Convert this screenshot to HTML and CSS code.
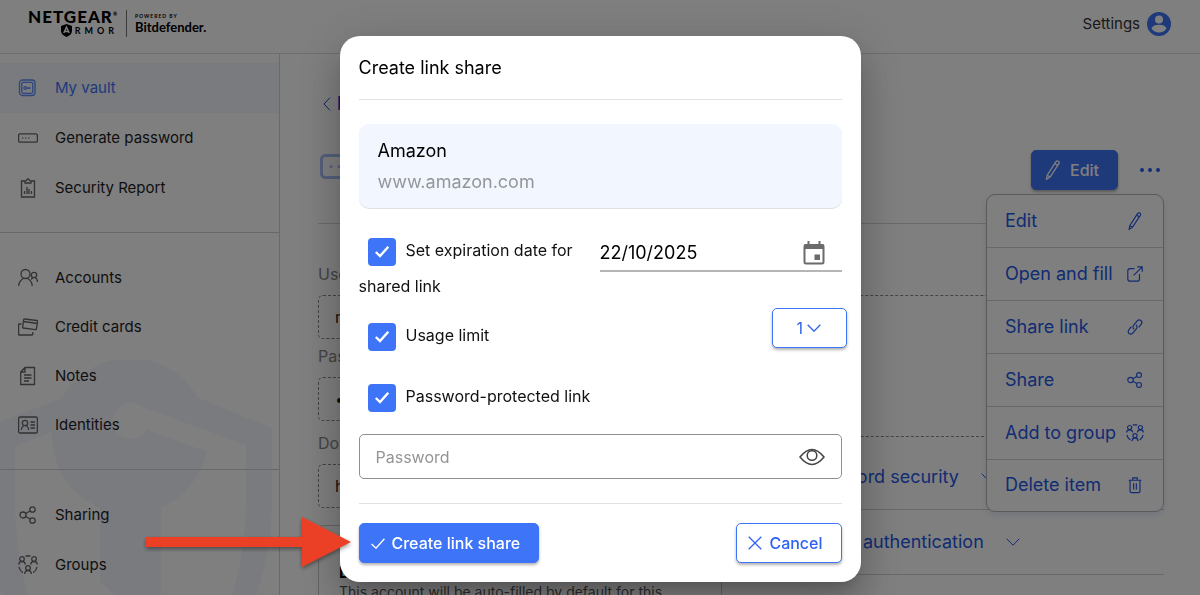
FILE: index.html
```
<!DOCTYPE html>
<html lang="en">
<head>
  <meta charset="UTF-8">
  <meta name="viewport" content="width=device-width, initial-scale=1">
  <title>NETGEAR Armor - Create link share</title>
  <link rel="stylesheet" href="styles.css">
</head>
<body>

<!-- shared icons -->
<svg class="sprite" aria-hidden="true">
  <symbol id="i-share" viewBox="0 0 20 20"><circle cx="5" cy="10" r="3"/><circle cx="14.500" cy="4.500" r="2.700"/><circle cx="14.500" cy="15.500" r="2.700"/><path d="M7.700 8.500 12 6M7.700 11.500 12 14"/></symbol>
  <symbol id="i-group" viewBox="0 0 20 20"><circle cx="4" cy="4" r="2.300"/><circle cx="16" cy="4" r="2.300"/><circle cx="10" cy="13" r="2.300"/><path d="M.7 9.500C.8 7.500 2.200 6.500 4 6.500s3.200 1 3.300 3M12.700 9.500c.1-2 1.500-3 3.300-3s3.200 1 3.300 3M6.700 19c.1-2.300 1.500-3.500 3.300-3.500s3.200 1.200 3.300 3.500M7.500 1h5M1 12c.4 2.400 1.700 4.300 3.800 5.700M19 12c-.4 2.400-1.700 4.300-3.800 5.700"/></symbol>
  <symbol id="i-pen" viewBox="0 0 20 20"><path d="M3.500 19.200 4.200 15.200 12.800 1.800c.6-.9 1.600-1.100 2.500-.6s1.100 1.600.6 2.500L7.100 17zM4.200 15.200 7.100 17M11.800 3.500l2.900 1.900"/></symbol>
  <symbol id="i-down" viewBox="0 0 14 8"><path d="M.7.700 7 7.200 13.300.700"/></symbol>
</svg>

<header class="topbar">
  <div class="brand">
    <div class="netgear">
      <span class="netgear-name">NETGEAR<sup>®</sup></span>
      <span class="armor"><svg width="11" height="13" viewBox="0 0 11 13"><path class="shield" d="M5.500 0 11 2v5c0 2.500-2.200 4.500-5.500 6C2.200 11.500 0 9.500 0 7V2z"/><path class="shield-a" d="M2.800 9 5.500 3.200 8.200 9M3.800 7.500h3.400"/></svg>RMOR</span>
    </div>
    <div class="bitdefender">
      <span class="powered">POWERED BY</span>
      <span class="bd-name">Bitdefender.</span>
    </div>
  </div>
  <a class="settings" href="#">Settings
    <svg width="24" height="24" viewBox="0 0 24 24"><circle class="av" cx="12" cy="12" r="12"/><circle class="av-in" cx="12" cy="7.500" r="4"/><path class="av-in" d="M4.500 16.500c1-2.700 4-3.700 7.500-3.700s6.500 1 7.500 3.700c-1.500 2.500-4.500 4-7.500 4s-6-1.500-7.500-4z"/></svg>
  </a>
</header>

<div class="layout">
  <nav class="sidebar">
    <svg class="watermark" viewBox="0 360 280 235" aria-hidden="true">
      <path d="M-6 424 65 397H197L272 428V500Q272 550 255 600H5L-6 580z"/>
      <circle cx="130" cy="436" r="76"/>
      <path class="cut" d="M15 446 130 403 246 445V500Q246 550 231 600H29Q15 550 15 500z"/>
      <circle cx="130" cy="436" r="78"/>
      <path d="M100 505H161V600H121L100 582z"/>
      <path class="cut" d="M137 405 246 445V470L208 452 147 430 130 430z"/>
      <circle class="cut" cx="131" cy="421" r="18"/>
    </svg>
    <div class="nav-group main">
      <a class="active" href="#"><svg class="ico" viewBox="0 0 20 20"><rect x="1.500" y="2" width="15.500" height="15.500" rx="3"/><rect x="3.800" y="4.300" width="11" height="11" rx="1.500"/><circle cx="7.200" cy="10" r="1.300"/><path d="M8.500 10h4M11 10v1"/></svg>My vault</a>
      <a href="#"><svg class="ico" viewBox="0 0 20 20"><rect x=".6" y="5.800" width="18.800" height="8.400" rx="1.500"/><path d="M4.300 10h1M7.300 10h1M10.300 10h1"/></svg>Generate password</a>
      <a href="#"><svg class="ico" viewBox="0 0 20 20"><path d="M7 3H3.500v16h13V3H13M7 3v2h6V3l-1.500-.5Q11.300 1 10 1T8.500 2.500zM6.500 16v-3M9 16V9M11 16v-5M13.500 16v-3"/></svg>Security Report</a>
    </div>
    <div class="nav-group types">
      <a href="#"><svg class="ico" viewBox="0 0 20 20"><circle cx="7.500" cy="6" r="4.500"/><circle cx="16" cy="7" r="2.700"/><path d="M.7 18c0-4 1.500-5.500 4.500-7.500M9.800 10.500c3 2 4.400 3.500 4.400 7.500M14.700 9.500l-1.500 2M17.200 9.500c1.500.8 2.300 2 2.300 4.500"/></svg>Accounts</a>
      <a href="#"><svg class="ico" viewBox="0 0 20 20"><path d="M6.500 2 19 3.500q.8.200.6 1L18.300 12q-.2.800-1 .7L5.300 11q-.8-.2-.6-1L5.700 2.700Q5.800 2 6.500 2zM5.500 4.500l14 2M3.500 7H1.300Q.6 7 .6 7.700v9.600q0 .7.700.7H14q.8 0 .8-.8V15"/></svg>Credit cards</a>
      <a href="#"><svg class="ico" viewBox="0 0 20 20"><path d="M7 1.500h9.500v17H2.700V6zM7 1.500V6H2.700M6 9h7.500M6 12h7.500M6 15h5"/></svg>Notes</a>
      <a href="#"><svg class="ico" viewBox="0 0 20 20"><rect x=".6" y="2" width="18.800" height="16" rx="1.500"/><circle cx="7" cy="8" r="2.700"/><path d="M3.300 15c0-2.500 1-3.500 2.500-4.500M8.200 10.500c1.500 1 2.500 2 2.500 4.500M12.500 7h4.500M12.500 10h4.500M12.500 13h4.500"/></svg>Identities</a>
    </div>
    <div class="nav-group">
      <a href="#"><svg class="ico"><use href="#i-share"/></svg>Sharing</a>
      <a href="#"><svg class="ico"><use href="#i-group"/></svg>Groups</a>
    </div>
  </nav>

  <main class="content">
    <a class="back" href="#"><svg width="8" height="14" viewBox="0 0 8 14"><path d="M7 .7.900 7 7 13.300"/></svg>Back</a>
    <div class="item-head">
      <svg class="item-logo" width="52" height="25" viewBox="0 0 52 25"><rect x="1.500" y="1.500" width="49" height="22" rx="4"/><path d="M11 12.500h.1M19 12.500h.1M27 12.500h.1"/></svg>
      <div class="actions">
        <button class="btn primary edit"><svg class="ico"><use href="#i-pen"/></svg>Edit</button>
        <button class="more" aria-label="More actions"><i></i><i></i><i></i></button>
        <div class="menu">
          <a href="#">Edit<svg class="ico"><use href="#i-pen"/></svg></a>
          <a href="#">Open and fill<svg class="ico" viewBox="0 0 20 20"><path d="M9.500 4H4.500Q2 4 2 6.500v9Q2 18 4.500 18h8q2.500 0 2.500-2.500V10M8.500 11.500 18 2M12.500 2H18v5.500"/></svg></a>
          <a href="#">Share link<svg class="ico" viewBox="0 0 20 20"><path d="M9 12.500c-1.500-1-1.700-2.800-.6-4.200l4-5c1.100-1.400 2.900-1.500 4.100-.5 1.300 1 1.400 2.800.4 4.100l-2.800 3.600M11 7.500c1.500 1 1.700 2.800.6 4.200l-4 5c-1.100 1.400-2.900 1.500-4.100.5-1.300-1-1.400-2.800-.4-4.100l2.800-3.600"/></svg></a>
          <a href="#">Share<svg class="ico"><use href="#i-share"/></svg></a>
          <a href="#">Add to group<svg class="ico"><use href="#i-group"/></svg></a>
          <a href="#">Delete item<svg class="ico" viewBox="0 0 20 20"><path d="M3 4.700h14M4.500 4.700V17q0 1.500 1.500 1.500h8q1.500 0 1.500-1.500V4.700M7.500 4.500V2h5v2.500M8.500 8v7M11.500 8v7"/></svg></a>
        </div>
      </div>
    </div>

    <div class="columns">
      <div class="fields">
        <span class="field-name">Username</span>
        <div class="field-box">myname</div>
        <span class="field-name">Password</span>
        <div class="field-box secret">••••••••</div>
        <span class="field-name">Domain</span>
        <div class="field-box">https://www.amazon.com</div>
        <div class="autofill">
          <h3>Default account</h3>
          <p>This account will be auto-filled by default for this domain.</p>
        </div>
      </div>
      <div class="extras">
        <span class="field-name">Note</span>
        <div class="note-box"></div>
        <a class="expand first" href="#">Item password security<svg width="14" height="8"><use href="#i-down"/></svg></a>
        <a class="expand" href="#">Two-Factor authentication<svg width="14" height="8"><use href="#i-down"/></svg></a>
      </div>
    </div>
  </main>
</div>

<div class="overlay">
  <form class="modal">
    <h2>Create link share</h2>
    <div class="target">
      <strong>Amazon</strong>
      <span>www.amazon.com</span>
    </div>

    <div class="option expire">
      <label><input type="checkbox" checked>Set expiration date for shared link</label>
      <div class="date">
        <input type="text" value="22/10/2025" aria-label="Expiration date">
        <button type="button" aria-label="Pick a date"><svg width="22" height="24" viewBox="0 0 22 24"><rect x="1.500" y="4" width="19" height="18.500" rx="1.500"/><path class="fill" d="M1 3.500h20V8H1zM11.500 13.500h5.500V19h-5.500zM4.500 0h2v4h-2zM15.500 0h2v4h-2z"/></svg></button>
      </div>
    </div>
    <div class="option usage">
      <label><input type="checkbox" checked>Usage limit</label>
      <div class="limit">
        <select aria-label="Usage limit"><option>1</option><option>5</option><option>10</option></select>
        <svg width="14" height="8"><use href="#i-down"/></svg>
      </div>
    </div>
    <div class="option protect">
      <label><input type="checkbox" checked>Password-protected link</label>
    </div>

    <div class="password">
      <input type="password" placeholder="Password" aria-label="Password">
      <button type="button" aria-label="Show password"><svg width="26" height="18" viewBox="0 0 26 18"><path d="M1 9C5.500 3.500 9 1.500 13 1.500S20.500 3.500 25 9c-4.500 5.500-8 7.500-12 7.500S5.500 14.500 1 9z"/><circle cx="13" cy="7.500" r="4.800"/></svg></button>
    </div>

    <div class="buttons">
      <button type="button" class="btn primary"><svg width="14" height="11" viewBox="0 0 14 11"><path d="M.6 6 5 10.200 13.400.800"/></svg>Create link share</button>
      <button type="button" class="btn outline"><svg width="14" height="14" viewBox="0 0 14 14"><path d="M.7.700 13.300 13.300M13.300.700.700 13.300"/></svg>Cancel</button>
    </div>

    <svg class="pointer" width="206" height="50" viewBox="0 0 206 50" aria-hidden="true"><path d="M0 20H156V0L205 25 156 50V30H0z"/></svg>
  </form>
</div>

</body>
</html>
```
FILE: styles.css
```
* { box-sizing: border-box; }
html, body { height: 100%; }
body {
  margin: 0;
  overflow: hidden;
  background: #fff;
  color: #1d1d1f;
  font: 16px/24px Inter, "Liberation Sans", sans-serif;
  display: flex;
  flex-direction: column;
}
a { color: inherit; text-decoration: none; }
button, input, select { font: inherit; color: inherit; }
button { cursor: pointer; }
svg { fill: none; stroke: currentColor; flex: none; }
.sprite { position: absolute; width: 0; height: 0; }
.ico { width: 20px; height: 20px; stroke-width: 1.3; }

/* header */
.topbar {
  display: flex;
  justify-content: space-between;
  align-items: center;
  height: 54px;
  flex: none;
  padding: 0 29px 6px 28px;
  border-bottom: 1px solid #dcdcdc;
}
.brand { display: flex; align-items: center; color: #000; font-family: Lato, sans-serif; }
.netgear {
  display: flex;
  flex-direction: column;
  align-items: flex-end;
  padding-right: 8px;
  border-right: 1px solid #777;
}
.netgear-name { font-size: 17px; line-height: 14px; font-weight: 900; letter-spacing: 1px; }
.netgear-name sup { font-size: 5px; line-height: 0; vertical-align: 7px; }
.armor { display: flex; align-items: center; gap: 3px; font-size: 9px; line-height: 13px; font-weight: 700; letter-spacing: 4px; }
.shield { fill: #000; stroke: none; }
.shield-a { stroke: #fff; stroke-width: 1.5; }
.bitdefender { display: flex; flex-direction: column; padding-left: 8px; }
.powered { font-size: 5px; line-height: 7px; font-weight: 700; letter-spacing: 1px; }
.bd-name { font-size: 13px; line-height: 14px; font-weight: 700; }
.settings { display: flex; align-items: center; gap: 7px; color: #333; font-size: 15px; }
.av { fill: #3e74f7; stroke: none; }
.av-in { fill: #fff; stroke: none; }

/* sidebar */
.layout { display: flex; flex: 1; min-height: 0; overflow: hidden; }
.sidebar {
  position: relative;
  width: 280px;
  flex: none;
  border-right: 1px solid #d4d4d4;
  overflow: hidden;
}
.watermark { position: absolute; left: 0; bottom: 0; width: 280px; z-index: -1; fill: #f3f6ff; stroke: none; }
.watermark .cut { fill: #fff; }
.nav-group { padding: 20px 0; border-bottom: 1px solid #d0d0d0; }
.nav-group a { display: flex; align-items: center; gap: 17px; height: 50px; padding-left: 18px; font-size: 15px; }
.nav-group .ico { color: #666; }
.nav-group.main { padding: 9px 0 19px; }
.nav-group.types a { height: 49px; }
.nav-group:last-child { border-bottom: 0; }
.nav-group a.active { background: #f2f6ff; color: #3e74f7; }
.nav-group .active .ico { color: #5f8cf9; }

/* item page */
.content { flex: 1; padding: 38px 36px 0 38px; min-width: 0; }
.back { display: flex; align-items: center; gap: 6px; padding-left: 5px; color: #1a3fd8; font-size: 18px; font-weight: 600; }
.item-head {
  display: flex;
  align-items: center;
  justify-content: space-between;
  margin-top: 34px;
  height: 74px;
  padding: 0 4px 34px 2px;
  border-bottom: 1px solid #d4d4d4;
}
.item-logo { margin-bottom: 6px; color: #a9bff8; stroke-width: 3; stroke-linecap: round; }
.actions { position: relative; display: flex; align-items: center; gap: 22px; }
.more { display: flex; gap: 4px; padding: 10px 0; border: 0; background: none; }
.more i { width: 4px; height: 4px; border-radius: 50%; background: #2458e6; }
.menu {
  position: absolute;
  top: 44px;
  right: -4px;
  width: 178px;
  background: #fff;
  border: 1px solid #b5b5b5;
  border-radius: 9px;
  box-shadow: 0 3px 6px rgba(60, 100, 200, 0.15);
}
.menu a {
  display: flex;
  align-items: center;
  justify-content: space-between;
  height: 53px;
  padding: 0 19px 0 18px;
  color: #2458e6;
  font-size: 18px;
  white-space: nowrap;
  border-bottom: 1px solid #d0d0d0;
}
.menu a:last-child { height: 51px; border-bottom: 0; }
.menu .ico { width: 18px; height: 18px; }

.columns { display: grid; grid-template-columns: 1fr 1fr; gap: 38px; padding-top: 38px; }
.fields, .extras { display: flex; flex-direction: column; min-width: 0; }
.field-name { color: #888; line-height: 24px; }
.field-box { height: 44px; margin: 9px 0 5px; padding: 0 16px; line-height: 42px; border: 1px dashed #8a8a8a; border-radius: 5px; }
.field-box.secret { margin-bottom: 10px; }
.note-box { height: 142px; margin-top: 9px; border: 1px dashed #8a8a8a; border-radius: 5px; }
.autofill { margin-top: 12px; padding: 34px 20px; border: 1px solid #c8c8c8; border-radius: 5px; }
.autofill h3 { margin: 0; color: #000; font-size: 16px; line-height: 24px; font-weight: 700; }
.autofill p { margin: 0; color: #555; font-size: 14px; line-height: 16px; width: 340px; }
.expand { display: flex; align-items: center; gap: 22px; height: 65px; color: #2458e6; font-size: 18px; border-bottom: 1px solid #d0d0d0; }
.expand.first { margin-top: 8px; }

/* dialog */
.overlay {
  position: fixed;
  inset: 0;
  display: flex;
  justify-content: center;
  align-items: flex-start;
  padding-top: 36px;
  background: rgba(0, 0, 0, 0.5);
}
.modal {
  position: relative;
  width: 100%;
  max-width: 521px;
  padding: 0 19px 19px;
  background: #fff;
  border-radius: 20px;
  box-shadow: 0 11px 15px -7px rgba(0, 0, 0, 0.2), 0 24px 38px 3px rgba(0, 0, 0, 0.14), 0 9px 46px 8px rgba(0, 0, 0, 0.12);
}
.modal h2 { margin: 0 0 24px; color: #000; font-size: 18px; line-height: 63px; font-weight: 400; border-bottom: 1px solid #e2e2e2; }
.target {
  display: flex;
  flex-direction: column;
  gap: 6px;
  padding: 14px 19px;
  background: #f2f7ff;
  border-radius: 10px;
  box-shadow: 0 1px 0 #dfe1e5;
  font-size: 18px;
  line-height: 25px;
}
.target strong { color: #000; font-weight: 400; }
.target span { color: #949699; }
.option { display: flex; justify-content: space-between; align-items: flex-start; margin-right: -5px; color: #111; }
.option label { line-height: 36px; }
.option input[type="checkbox"] {
  appearance: none;
  width: 28px;
  height: 28px;
  margin: 0 10px 0 9px;
  vertical-align: middle;
  border-radius: 4px;
  background: #3e74f7 url("data:image/svg+xml,%3Csvg xmlns='http://www.w3.org/2000/svg' width='16' height='13'%3E%3Cpath d='M1.800 7 6 11 14.300 1.800' fill='none' stroke='white' stroke-width='2.400'/%3E%3C/svg%3E") center no-repeat;
}
.expire { margin: 24px 0 0; }
.expire label { width: 230px; }
.date { display: flex; align-items: center; width: 242px; height: 40px; padding: 4px 17px 0 0; border-bottom: 2px solid #b5b5b5; }
.date input { flex: 1; min-width: 0; padding: 0; border: 0; outline: 0; color: #000; font-size: 18px; background: none; }
.date button { display: flex; padding: 0; border: 0; background: none; color: #6b6b6b; stroke-width: 2; }
.fill { fill: currentColor; stroke: none; }
.usage { margin-top: 4px; }
.usage label { line-height: 54px; }
.limit { position: relative; color: #2f62f0; }
.limit select {
  display: block;
  appearance: none;
  width: 75px;
  height: 40px;
  padding: 0 24px;
  background: #fff;
  border: 1px solid #3e74f7;
  border-radius: 5px;
  box-shadow: 0 2px 3px rgba(0, 0, 0, 0.3);
}
.limit svg { position: absolute; right: 26px; top: 16px; pointer-events: none; stroke-width: 1.3; }
.protect { margin-top: 16px; }
.password { display: flex; align-items: center; height: 45px; margin: 20px 0 24px; padding: 0 16px; border: 1px solid #8f8f8f; border-radius: 5px; }
.password input { flex: 1; min-width: 0; padding: 0; border: 0; outline: 0; background: none; }
.password input::placeholder { color: #949494; opacity: 1; }
.password button { display: flex; padding: 0; border: 0; background: none; color: #444; stroke-width: 1.5; }
.buttons { display: flex; justify-content: space-between; padding-top: 19px; border-top: 1px solid #e2e2e2; }
.btn {
  display: flex;
  align-items: center;
  gap: 7px;
  height: 40px;
  padding: 0 18px 0 11px;
  border: 1px solid #3e74f7;
  border-radius: 5px;
  box-shadow: 0 2px 3px rgba(0, 0, 0, 0.3);
  font-weight: 500;
  stroke-width: 1.3;
}
.primary { background: #3e74f7; color: #fff; }
.outline { background: #fff; color: #2f62f0; }
.pointer {
  position: absolute;
  left: -194px;
  bottom: 15px;
  fill: #eb4026;
  stroke: none;
  filter: drop-shadow(0 2px 2px rgba(0, 0, 0, 0.4));
}
```
